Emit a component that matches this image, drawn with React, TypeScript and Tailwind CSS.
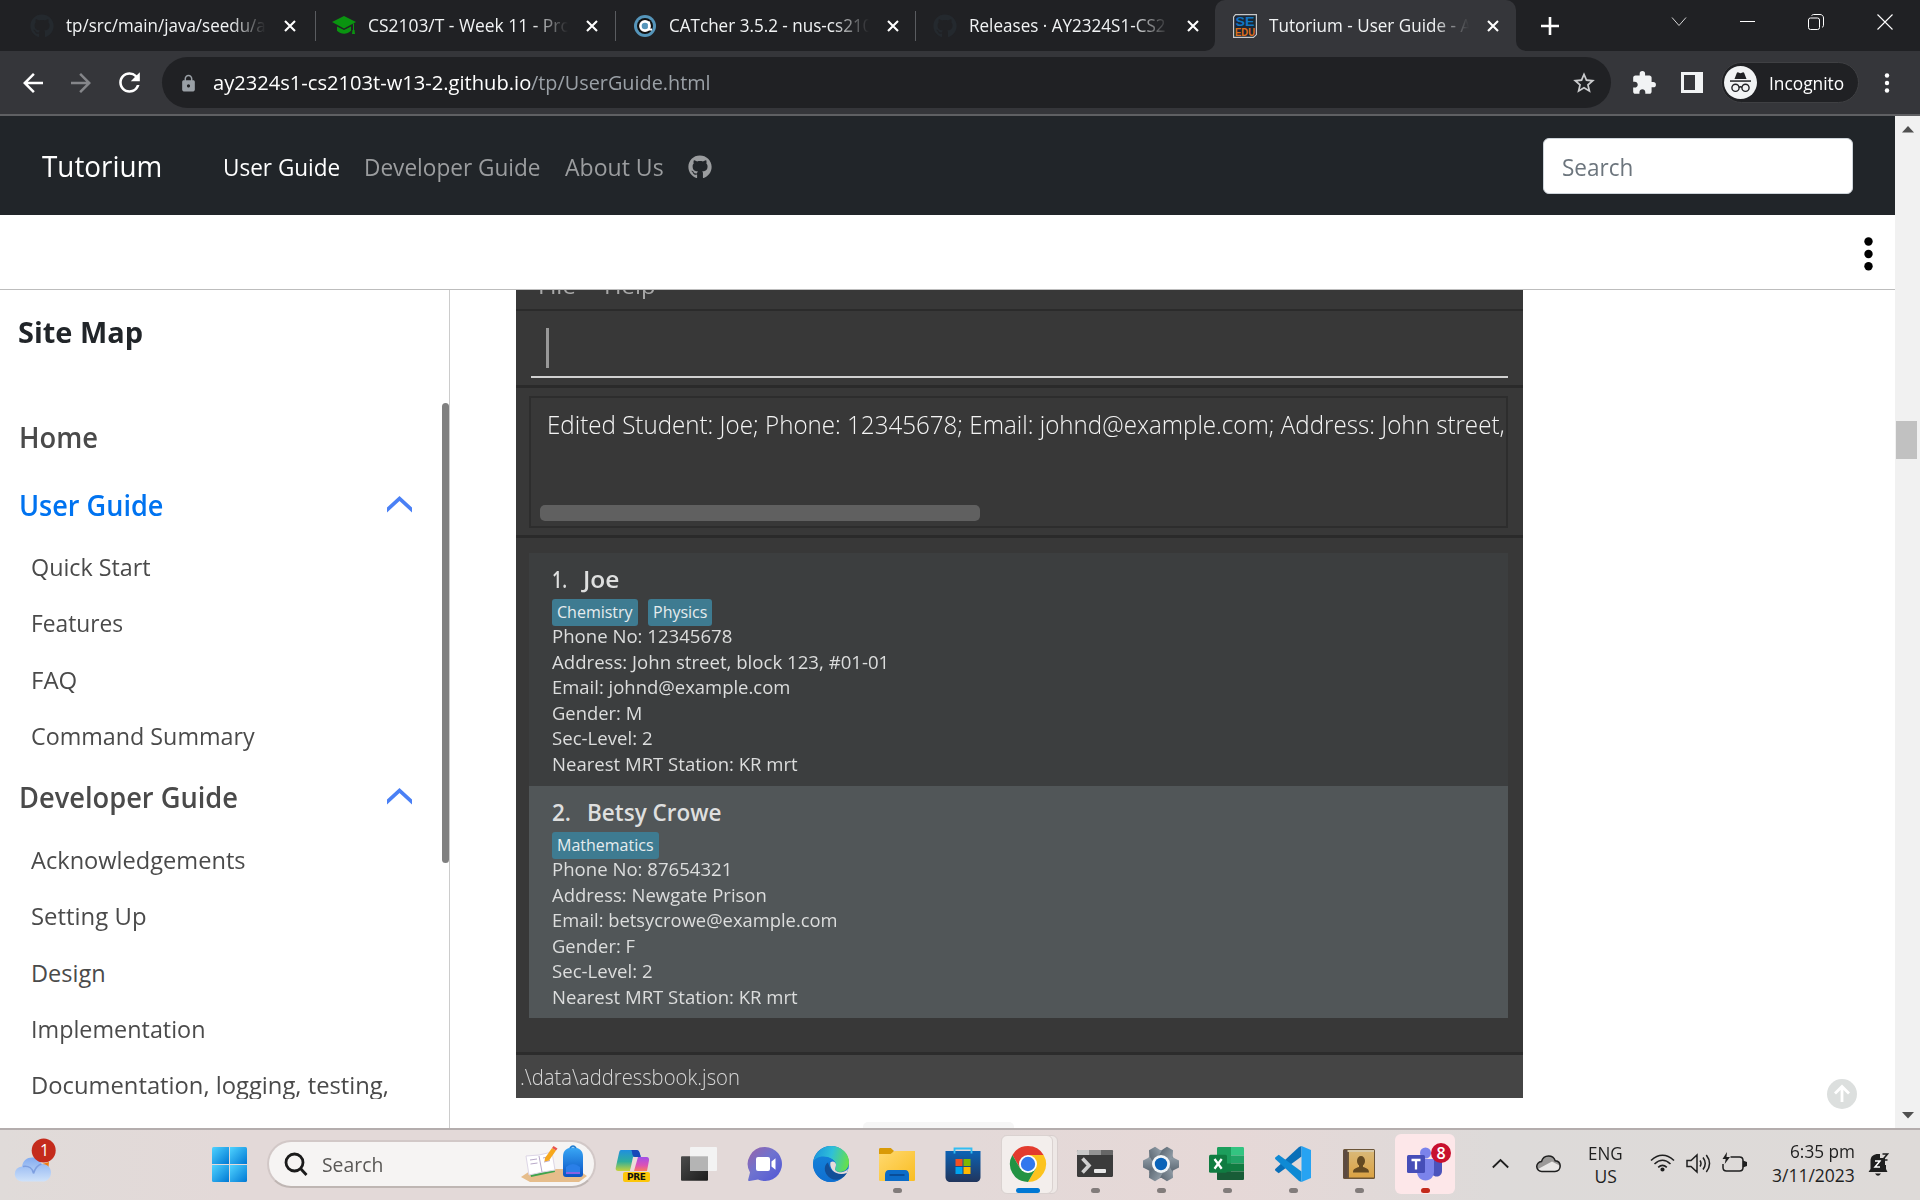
import { useLayoutEffect, useRef, useState, type ReactNode } from "react";
import { FaGithub } from "react-icons/fa";
import { MdArrowBack, MdArrowForward, MdRefresh, MdLock, MdStarBorder, MdExtension } from "react-icons/md";

/* One line of text, condensed or stretched to a given width. */
function T({ w, children, className = "" }: { w: number; children: string; className?: string }) {
  const ref = useRef<HTMLSpanElement>(null);
  const [scale, setScale] = useState(1);
  useLayoutEffect(() => {
    if (ref.current) setScale(w / ref.current.offsetWidth);
  }, [w]);
  return (
    <span className={"block shrink-0 whitespace-pre " + className} style={{ width: w }}>
      <span ref={ref} className="inline-block origin-left" style={{ transform: `scaleX(${scale})` }}>
        {children}
      </span>
    </span>
  );
}

function CloseX() {
  return (
    <svg className="h-3 w-3 shrink-0" viewBox="0 0 12 12" stroke="#fff" strokeWidth="2.1">
      <path d="M1 1l10 10M11 1L1 11" />
    </svg>
  );
}

function Cap() {
  return (
    <svg className="h-6 w-6" viewBox="0 0 24 24" fill="#0a9410">
      <path d="M0 8L12 2l12 6-12 6.5z" />
      <path d="M5 12.5l7 3.6 7-3.6v4.2c-2 2-4.500 3-7 3s-5-1-7-3z" />
      <path d="M21 9.500h1v7h-1zM20.500 16h2l.5 4h-3z" />
    </svg>
  );
}

function Catcher() {
  return (
    <svg className="h-6 w-6" viewBox="0 0 24 24">
      <circle cx="12" cy="12" r="11" fill="#5595ba" />
      <circle cx="12" cy="12" r="8" fill="#111" />
      <circle cx="12" cy="12" r="4.600" fill="#5595ba" stroke="#fff" strokeWidth="2.600" />
      <path d="M16 7.500v8h3" fill="none" stroke="#fff" strokeWidth="2.200" />
    </svg>
  );
}

function SeEdu() {
  return (
    <svg className="h-6 w-6" viewBox="0 0 24 24">
      <path d="M2.500.6h20.900v20l-3 2.800H.6V3z" fill="#1c2733" stroke="#c9c9c9" strokeWidth="1.200" />
      <text x="12" y="12" textAnchor="middle" fontFamily="Liberation Sans" fontWeight="700" fontSize="13" textLength="19" lengthAdjust="spacingAndGlyphs" fill="#1176c4">SE</text>
      <text x="12" y="21.500" textAnchor="middle" fontFamily="Liberation Sans" fontWeight="700" fontSize="10.500" textLength="20" lengthAdjust="spacingAndGlyphs" fill="#e0701a">EDU</text>
    </svg>
  );
}

function Tab({ icon, label, w, pad = "pl-[30px]" }: { icon: ReactNode; label: string; w: number; pad?: string }) {
  return (
    <div className={"flex h-[51px] items-center " + pad}>
      <span className="mr-3 w-6 shrink-0">{icon}</span>
      <div className="mb-px h-[30px] w-[200px] overflow-hidden text-[17.5px] leading-[30px] text-[#f1f3f4] [mask-image:linear-gradient(to_right,black_82%,transparent)]">
        <T w={w}>{label}</T>
      </div>
      <span className="ml-[18px]"><CloseX /></span>
    </div>
  );
}

function TabStrip() {
  return (
    <div className="flex h-[51px] bg-[#202124]">
      <div className="w-[315px]"><Tab icon={<FaGithub size={24} color="#24292e" />} label="tp/src/main/java/seedu/a" w={200} /></div>
      <div className="mt-[11px] h-[30px] w-px bg-[#5a5c60]" />
      <div className="w-[299px]"><Tab icon={<Cap />} label="CS2103/T - Week 11 - Pro" w={203} pad="pl-4" /></div>
      <div className="mt-[11px] h-[30px] w-px bg-[#5a5c60]" />
      <div className="w-[299px]"><Tab icon={<Catcher />} label="CATcher 3.5.2 - nus-cs210" w={203} pad="pl-[17px]" /></div>
      <div className="mt-[11px] h-[30px] w-px bg-[#5a5c60]" />
      <div className="w-[289px]"><Tab icon={<FaGithub size={24} color="#24292e" />} label="Releases · AY2324S1-CS2" w={197} pad="pl-[17px]" /></div>
      <div className="flex h-[51px] w-[10px] items-end bg-[#35363a]"><div className="h-[51px] w-[10px] rounded-br-[10px] bg-[#202124]" /></div>
      <div className="w-[301px] bg-[#202124]">
        <div className="h-[51px] rounded-t-[10px] bg-[#35363a]"><Tab icon={<SeEdu />} label="Tutorium - User Guide - A" w={202} pad="pl-[18px]" /></div>
      </div>
      <div className="w-[10px] bg-[#35363a]"><div className="h-[51px] w-[10px] rounded-bl-[10px] bg-[#202124]" /></div>
      <svg className="mt-[17px] ml-[15px] h-[18px] w-[18px]" viewBox="0 0 18 18" stroke="#fff" strokeWidth="2.600"><path d="M9 0v18M0 9h18" /></svg>
      <svg className="mt-[16px] ml-[112px] h-[11px] w-[16px]" viewBox="0 0 16 11" fill="none" stroke="#d5d5d6"><path d="M1 1.500l7 8 7-8" /></svg>
      <div className="mt-[21px] ml-[53px] h-px w-[15px] bg-white" />
      <svg className="mt-[14px] ml-[53px] h-4 w-4" viewBox="0 0 16 16" fill="none" stroke="#fff"><rect x=".5" y="4" width="11" height="11.500" rx="2" /><path d="M3.500 1.700C4.200.8 5 .5 6 .5h6c2 0 3.500 1.500 3.500 3.500v7c0 1-.5 2-1.500 2.500" /></svg>
      <svg className="mt-[14px] ml-[53px] h-4 w-4" viewBox="0 0 16 16" stroke="#fff" strokeWidth="1.100"><path d="M.5.5l15 15M15.500.5l-15 15" /></svg>
    </div>
  );
}

function Toolbar() {
  return (
    <div className="flex h-[65px] items-center border-b-2 border-[#5f6063] bg-[#35363a]">
      <MdArrowBack className="ml-[18px] shrink-0" size={30} color="#fff" />
      <MdArrowForward className="ml-[18px] shrink-0" size={30} color="#85868a" />
      <MdRefresh className="ml-[18px] shrink-0" size={31} color="#fff" />
      <div className="ml-[17px] flex h-[51px] w-[1449px] items-center rounded-full bg-[#202124] text-[20.5px] leading-[30px]">
        <MdLock className="mt-[2px] ml-[17px] shrink-0" size={19} color="#9aa0a6" />
        <T w={318} className="mb-[2px] ml-[15px] text-white">ay2324s1-cs2103t-w13-2.github.io</T>
        <T w={180} className="mb-[2px] text-[#9aa0a6]">/tp/UserGuide.html</T>
        <MdStarBorder className="ml-auto mr-[14px]" size={26} color="#cbccce" />
      </div>
      <MdExtension className="ml-[20px] shrink-0" size={26} color="#f1f3f4" />
      <svg className="ml-[24px] h-[21px] w-[22px] shrink-0" viewBox="0 0 22 21"><path fillRule="evenodd" d="M0 0h22v21H0zM3 3v15h11V3z" fill="#f1f3f4" /></svg>
      <div className="ml-[18px] flex h-[41px] w-[138px] shrink-0 items-center rounded-full border border-[#3f4043] bg-[#202124]">
        <svg className="ml-[2px] h-[33px] w-[33px] shrink-0" viewBox="0 0 33 33">
          <circle cx="16.500" cy="16.500" r="16.500" fill="#f1f3f4" />
          <path d="M10.500 13l2.300-6c.3-.7.9-.9 1.600-.6l2.100.8 2.100-.8c.7-.3 1.300-.1 1.600.6l2.300 6z" fill="#202124" />
          <path d="M6 14.300h21v1.500H6z" fill="#202124" />
          <g fill="none" stroke="#202124" strokeWidth="1.400"><circle cx="11.500" cy="21.800" r="3.600" /><circle cx="21.500" cy="21.800" r="3.600" /><path d="M15 21.500q1.500-1.300 3 0" /></g>
        </svg>
        <T w={75} className="ml-3 text-[18px] leading-[30px] text-white">Incognito</T>
      </div>
      <svg className="ml-[25px] h-[20px] w-[6px]" viewBox="0 0 6 20" fill="#fff"><circle cx="3" cy="2.500" r="2.200" /><circle cx="3" cy="10" r="2.200" /><circle cx="3" cy="17.500" r="2.200" /></svg>
    </div>
  );
}

function NavBar() {
  return (
    <div className="flex h-[99px] shrink-0 items-center bg-[#212529] text-[23.5px] leading-[36px] text-[#9b9d9f]">
      <T w={120} className="ml-[42px] text-[29px] text-white">Tutorium</T>
      <T w={117} className="mt-[2px] ml-[61px] text-white">User Guide</T>
      <T w={177} className="mt-[2px] ml-[24px]">Developer Guide</T>
      <T w={99} className="mt-[2px] ml-[24px]">About Us</T>
      <FaGithub className="mt-[2px] ml-[24px]" size={24} />
      <div className="mt-px mr-[42px] ml-auto flex h-[56px] w-[310px] items-center rounded-md border border-[#ced4da] bg-white pl-[18px] text-[#6c757d]">
        <T w={71} className="mt-[2px]">Search</T>
      </div>
    </div>
  );
}

type Item = [string, number];
const guide: Item[] = [["Quick Start", 120], ["Features", 92], ["FAQ", 46], ["Command Summary", 224]];
const dev: Item[] = [["Acknowledgements", 215], ["Setting Up", 116], ["Design", 75], ["Implementation", 174], ["Documentation, logging, testing,", 358]];

function SubItems({ items }: { items: Item[] }) {
  return (
    <div className="pl-[31px] text-[23.5px] leading-[56.25px]">
      {items.map(([s, w]) => <T key={s} w={w}>{s}</T>)}
    </div>
  );
}

function Chevron() {
  return <svg className="mb-[2px] ml-auto h-[17px] w-[25px]" viewBox="0 0 25 17" fill="#4a80f5"><path d="M12.500 0L25 11.500V16.500L12.500 5 0 16.500V11.500z" /></svg>;
}

function Sidebar() {
  return (
    <div className="flex w-[450px] shrink-0 border-r border-[#cccccc] text-[#4a4a4a]">
      <div className="flex h-[809px] w-[442px] flex-col overflow-hidden pt-2 text-[28px] leading-[68px]">
        <T w={125} className="ml-[18px] font-bold text-[#212529]">Site Map</T>
        <T w={79} className="mt-[37px] ml-[19px] font-semibold">Home</T>
        <div className="flex h-[68px] shrink-0 items-center pr-[30px] pl-[19px]">
          <T w={144} className="font-semibold text-[#0073f0]">User Guide</T>
          <Chevron />
        </div>
        <SubItems items={guide} />
        <div className="mb-[2px] flex h-[66px] shrink-0 items-center pr-[30px] pl-[19px]">
          <T w={219} className="font-semibold">Developer Guide</T>
          <Chevron />
        </div>
        <SubItems items={dev} />
      </div>
      <div className="mt-[113px] h-[460px] w-[7px] rounded-full bg-[#808080]" />
    </div>
  );
}

type Student = { n: string; nw: number; name: string; w: number; tags: Item[]; lines: Item[] };
const students: Student[] = [
  {
    n: "1.", nw: 15, name: "Joe", w: 36, tags: [["Chemistry", 76], ["Physics", 54]],
    lines: [["Phone No: 12345678", 180], ["Address: John street, block 123, #01-01", 337], ["Email: johnd@example.com", 238], ["Gender: M", 90], ["Sec-Level: 2", 101], ["Nearest MRT Station: KR mrt", 246]],
  },
  {
    n: "2.", nw: 19, name: "Betsy Crowe", w: 135, tags: [["Mathematics", 97]],
    lines: [["Phone No: 87654321", 180], ["Address: Newgate Prison", 215], ["Email: betsycrowe@example.com", 286], ["Gender: F", 83], ["Sec-Level: 2", 101], ["Nearest MRT Station: KR mrt", 246]],
  },
];

function Card({ s, className }: { s: Student; className: string }) {
  return (
    <div className={"pl-[23px] text-[#dcdddd] " + className}>
      <div className="flex gap-[16px] pt-[12px] text-[22.5px] leading-[30px] font-semibold text-[#dedfdf]">
        <T w={s.nw}>{s.n}</T>
        <T w={s.w}>{s.name}</T>
      </div>
      <div className="mt-[4px] flex h-[25px] gap-[10px]">
        {s.tags.map(([t, w]) => (
          <div key={t} className="h-[27px] rounded-[3px] bg-[#3e7b91] px-[5px] text-[16px] leading-[26px] font-medium text-[#e6ecee]"><T w={w}>{t}</T></div>
        ))}
      </div>
      <div className="text-[19px] leading-[25.5px]">
        {s.lines.map(([t, w]) => <T key={t} w={w}>{t}</T>)}
      </div>
    </div>
  );
}

function AppShot() {
  return (
    <div className="ml-[66px] flex h-[808px] w-[1007px] shrink-0 flex-col overflow-hidden bg-[#383838]">
      <div className="flex h-[19px] shrink-0 items-end pl-[22px] text-[22px] leading-[30px] text-[#a8a8a8]">
        <T w={38} className="h-[39px]">File</T>
        <T w={52} className="ml-[28px] h-[39px]">Help</T>
      </div>
      <div className="h-[2px] shrink-0 bg-[#2b2b2b]" />
      <div className="mx-[15px] h-[67px] shrink-0 border-b-2 border-[#d0d0d0] pt-[17px] pl-[15px]">
        <div className="h-[40px] w-[3px] bg-[#999]" />
      </div>
      <div className="mt-[7px] h-[3px] shrink-0 bg-[#2a2a2a]" />
      <div className="mt-[8px] ml-[13px] flex h-[132px] w-[979px] shrink-0 flex-col overflow-hidden border-2 border-[#2d2d2d]">
        <T w={958} className="mt-[8px] ml-4 text-[25px] leading-[36px] font-light text-[#f4f4f4]">Edited Student: Joe; Phone: 12345678; Email: johnd@example.com; Address: John street,</T>
        <div className="mt-auto mb-[5px] ml-[9px] h-4 w-[440px] rounded-[5px] bg-[#606060]" />
      </div>
      <div className="mt-[7px] h-[3px] shrink-0 bg-[#2a2a2a]" />
      <div className="mt-[15px] ml-[13px] w-[979px] shrink-0">
        <Card s={students[0]} className="h-[233px] bg-[#3c3e3f]" />
        <Card s={students[1]} className="h-[232px] bg-[#515658]" />
      </div>
      <div className="mt-[34px] h-[3px] shrink-0 bg-[#2c2c2c]" />
      <div className="flex-1 bg-[#454545] pl-1 text-[22px] leading-[42px] font-light text-[#d8d8d8]">
        <T w={220}>.\data\addressbook.json</T>
      </div>
    </div>
  );
}

function Page() {
  return (
    <div className="flex h-[1012px]">
      <div className="flex w-[1895px] flex-col bg-white">
        <NavBar />
        <div className="flex h-[75px] shrink-0 items-center justify-end border-b border-[#bdbdbd] pr-[22px]">
          <svg className="mt-[3px] h-[34px] w-[9px]" viewBox="0 0 9 34"><circle cx="4.500" cy="4.500" r="4.200" /><circle cx="4.500" cy="17" r="4.200" /><circle cx="4.500" cy="29.300" r="4.200" /></svg>
        </div>
        <div className="relative flex h-[838px]">
          <Sidebar />
          <AppShot />
          <svg className="mt-[789px] ml-[304px] h-[30px] w-[30px]" viewBox="0 0 30 30" fill="none"><circle cx="15" cy="15" r="15" fill="#dcdfde" /><path d="M15 23V8M8 14.500L15 7.500l7 7" stroke="#fff" strokeWidth="2.800" /></svg>
          <div className="absolute bottom-0 left-[863px] h-[6px] w-[151px] rounded-t-[5px] bg-[#f6f6f6]" />
        </div>
      </div>
      <div className="flex w-[25px] flex-col items-center bg-[#f1f1f1]">
        <svg className="mt-[10px] h-[7px] w-[12px]" viewBox="0 0 12 7" fill="#505050"><path d="M0 6.500L6 0l6 6.500z" /></svg>
        <div className="mt-[288px] h-[38px] w-[21px] -translate-x-px bg-[#c1c1c1]" />
        <svg className="mt-auto mb-[9px] h-[7px] w-[12px]" viewBox="0 0 12 7" fill="#505050"><path d="M0 0h12L6 6.500z" /></svg>
      </div>
    </div>
  );
}

function Pic({ children }: { children: ReactNode }) {
  return <svg className="h-9 w-9 overflow-visible" viewBox="0 0 36 36">{children}</svg>;
}

const gradients = (
  <svg className="absolute h-0 w-0">
    <defs>
      <linearGradient id="win" x1="0" y1="0" x2="1" y2="1"><stop offset="0" stopColor="#4fd3ff" /><stop offset="1" stopColor="#0078d4" /></linearGradient>
      <linearGradient id="cloud" x1="0" y1="0" x2="0" y2="1"><stop offset="0" stopColor="#84acf0" /><stop offset="1" stopColor="#cfe2fa" /></linearGradient>
      <linearGradient id="copA" x1="0" y1="0" x2="0" y2="1"><stop offset="0" stopColor="#1f8fe0" /><stop offset=".55" stopColor="#2fae9c" /><stop offset="1" stopColor="#c8d23a" /></linearGradient>
      <linearGradient id="copB" x1="0" y1="0" x2="0" y2="1"><stop offset="0" stopColor="#a14fe8" /><stop offset=".6" stopColor="#dd52b5" /><stop offset="1" stopColor="#fb7c5c" /></linearGradient>
      <linearGradient id="blk" x1="0" y1="0" x2="1" y2="1"><stop offset="0" stopColor="#4b4b4b" /><stop offset="1" stopColor="#1c1c1c" /></linearGradient>
      <linearGradient id="chat" x1="0" y1="0" x2="1" y2="1"><stop offset="0" stopColor="#9a62a8" /><stop offset=".45" stopColor="#6f73cf" /><stop offset="1" stopColor="#4f55d6" /></linearGradient>
      <linearGradient id="edgeA" x1="0" y1=".3" x2="1" y2=".5"><stop offset="0" stopColor="#1a94dd" /><stop offset=".5" stopColor="#2fc0d8" /><stop offset="1" stopColor="#66e04a" /></linearGradient>
      <linearGradient id="edgeB" x1="0" y1="0" x2="0" y2="1"><stop offset="0" stopColor="#1480d8" /><stop offset="1" stopColor="#0f6fd0" /></linearGradient>
      <linearGradient id="fold" x1="0" y1="0" x2="1" y2="1"><stop offset="0" stopColor="#ffd970" /><stop offset="1" stopColor="#f9bd22" /></linearGradient>
      <linearGradient id="store" x1="0" y1="0" x2="0" y2="1"><stop offset="0" stopColor="#0c63b5" /><stop offset="1" stopColor="#21355c" /></linearGradient>
      <linearGradient id="gear" x1="0" y1="0" x2="0" y2="1"><stop offset="0" stopColor="#8d99a3" /><stop offset="1" stopColor="#626e79" /></linearGradient>
      <linearGradient id="book" x1="0" y1="0" x2="0" y2="1"><stop offset="0" stopColor="#d9b877" /><stop offset="1" stopColor="#dba243" /></linearGradient>
      <linearGradient id="bag" x1="0" y1="0" x2="0" y2="1"><stop offset="0" stopColor="#39a7f5" /><stop offset="1" stopColor="#0a52c4" /></linearGradient>
    </defs>
  </svg>
);

const Copilot = (
  <Pic>
    <path d="M6 4h15c2 0 3 1 3.600 3l.9 3h-5L15 25H3.500C1 25 .2 23.500.9 21L4 7c.4-2 1-3 2-3z" fill="url(#copA)" />
    <path d="M16 4h5.500c2 0 2.600 1 3.200 3l1.200 4h-5.500c-2 0-2.800-1.500-3.200-3.500C17 5.500 16.800 4 16 4z" fill="#1848b8" />
    <path d="M21 11h10.500c2.500 0 2.900 1.700 2.400 4L32 25H15.500z" fill="url(#copB)" />
    <path d="M18 11h5l-4 14h-4z" fill="#ecdcd9" />
    <rect x="8" y="26" width="27" height="10" rx="2" fill="#fcc60a" />
    <text x="21.500" y="34.300" textAnchor="middle" fontFamily="DejaVu Sans" fontWeight="700" fontSize="9" textLength="19" fill="#111">PRE</text>
  </Pic>
);
const TaskView = (
  <Pic>
    <rect x="0" y="10.300" width="27" height="24.500" rx="1" fill="url(#blk)" />
    <rect x="9" y="1" width="27" height="24" rx="1" fill="#f3f3f3" />
    <path d="M9 10.300h18V25H9z" fill="#b4b4b4" />
  </Pic>
);
const Chat = (
  <Pic>
    <path d="M18 1a17 17 0 1 1-7 32.500L2.500 35c-1 .2-1.600-.6-1.300-1.500L3 26.500A17 17 0 0 1 18 1z" fill="url(#chat)" />
    <rect x="9" y="11" width="14" height="14" rx="2" fill="#fff" />
    <path d="M24.500 15.500l4-3.300v11.600l-4-3.300z" fill="#fff" />
  </Pic>
);
const Edge = (
  <Pic>
    <circle cx="18" cy="18" r="18" fill="#0f72cf" />
    <path d="M0 17C1 7 9 0 18 0c10 0 18 7 18 16 0 6-4 10-9 10-3 0-5-1.500-5-3 0-1 1-1.500 1-4 0-4-5-8-12-8C5 11 1 14 0 17z" fill="url(#edgeA)" />
    <path d="M0 17c1-4 5-6.500 10.500-6.500S22 14 22.800 18c-1-3-4-4-6.300-2.500C13 18 12 22 14 26c2 5 7 8 13 7-3 2-6 3-9 3C8 36 0 28 0 17z" fill="url(#edgeB)" />
    <path d="M14.500 16.500C11 20 11 25 14 29s8 6 13 4c3-1.300 5.500-3.500 6.700-6 .3-.7-.3-1-1-.7-5 2.300-12 .7-15-3.300-1.500-2-2-5-3.200-6.500z" fill="#124f98" />
    <path d="M23 18.500c0 2.500-1 3.300-1 4.500 0 2 3 3.500 6.500 3.200 3-.3 5-1.600 7-3.700L33.700 27c-5 1.800-11 1-14-2.500-2-2.300-3-6-2.200-8.200 2-1.800 5-.8 5.500 2.200z" fill="#e8dcda" />
  </Pic>
);
const Folder = (
  <Pic>
    <path d="M0 3.500C0 2.500.6 2 1.500 2h10.300l3.200 3-3 4H0z" fill="#d99a06" />
    <path d="M0 8h11.500l4-3H36v28.500c0 1-.6 1.500-1.500 1.500h-33C.6 35 0 34.500 0 33.500z" fill="url(#fold)" />
    <path d="M6 35v-6.500c0-2.500 1.500-4.500 4-4.500h16c2.500 0 4 2 4 4.500V35z" fill="#0c6cc8" />
    <path d="M10.500 29h15" stroke="#094a92" strokeWidth="1.800" />
  </Pic>
);
const Store = (
  <Pic>
    <path d="M.5 5h35v26c0 3-2 5-5 5h-25c-3 0-5-2-5-5z" fill="url(#store)" />
    <path d="M9.500 7.500V2.500h17v5" fill="none" stroke="#32bdf2" strokeWidth="1.800" />
    <path d="M10.500 13h7v7h-7z" fill="#f25022" /><path d="M18.500 13h7v7h-7z" fill="#7fba00" />
    <path d="M10.500 21h7v7h-7z" fill="#00a4ef" /><path d="M18.500 21h7v7h-7z" fill="#ffb900" />
  </Pic>
);
const Chrome = (
  <Pic>
    <path d="M2.400 9A18 18 0 0 1 33.600 9H18l-7.800 13.500z" fill="#e33b2e" />
    <path d="M33.600 9A18 18 0 0 1 18 36l7.800-13.500L18 9z" fill="#fcc31e" />
    <path d="M18 36A18 18 0 0 1 2.400 9l7.800 13.500h15.600z" fill="#229343" />
    <circle cx="18" cy="18" r="9" fill="#fff" /><circle cx="18" cy="18" r="7.200" fill="#3178ee" />
  </Pic>
);
const Terminal = (
  <Pic>
    <rect y="4" width="36" height="27" rx="1.500" fill="#3b3b3b" />
    <path d="M0 9V5.500C0 4.500.5 4 1.500 4H12v5z" fill="#c9c9c9" /><path d="M12 4h12v5H12z" fill="#949494" /><path d="M24 4h10.500c1 0 1.500.5 1.500 1.500V9H24z" fill="#666" />
    <path d="M5.500 12.500l6.500 7-6.500 7" fill="none" stroke="#cfcfcf" strokeWidth="3.600" />
    <rect x="17" y="23" width="12" height="4" rx="1" fill="#e8e8e8" />
  </Pic>
);
const Gear = (
  <Pic>
    <g fill="url(#gear)">
      <circle cx="18" cy="18" r="14" />
      {["rotate-0", "rotate-60", "rotate-120"].map((r) => (
        <path key={r} className={"origin-center " + r} d="M0 14.500L5 12h26l5 2.500v7L31 24H5L0 21.500z" />
      ))}
    </g>
    <circle cx="18" cy="18" r="9" fill="#f2f5f7" /><circle cx="18" cy="18" r="6.200" fill="#0a63b8" />
  </Pic>
);
const Excel = (
  <Pic>
    <path d="M8 2.500C8 1.500 8.500 1 9.500 1H22v33H9.500C8.500 34 8 33.500 8 32.500z" fill="#1c9e5c" />
    <path d="M22 1h11.500c1 0 1.500.5 1.500 1.500V9.500H22z" fill="#33c481" /><path d="M22 9.500h13v8H22z" fill="#21a366" /><path d="M8 17.500h27v8H8z" fill="#107c41" /><path d="M8 25.500h27v7c0 1-.5 1.500-1.500 1.500h-24c-1 0-1.500-.5-1.500-1.500z" fill="#185c37" />
    <rect y="8.700" width="18" height="18" rx="1.500" fill="#107c41" />
    <path d="M5.500 13l7.200 9.800M12.700 13l-7.200 9.800" stroke="#fff" strokeWidth="2.300" />
  </Pic>
);
const VsCode = (
  <Pic>
    <path d="M26.500 10.500L3.700 27.300.5 24.800c-.7-.6-.7-1.400 0-2.100L24 1l2.500-1z" fill="#0a6fb8" />
    <path d="M26.500 25.500L3.700 8.700.5 11.200c-.7.6-.7 1.400 0 2.100L24 35l2.500 1z" fill="#0f8ad4" />
    <path d="M26.500 0L36 4v28l-9.500 4z" fill="#27a3f2" />
  </Pic>
);
const Book = (
  <Pic>
    <rect x="2" y="3" width="32" height="30" rx="1.500" fill="#6b5437" />
    <rect x="8" y="5.500" width="25" height="26" fill="url(#book)" /><path d="M4 4h29v2H4z" fill="#d8c9a8" /><path d="M2.500 4h4v28h-4z" fill="#5c4a41" />
    <ellipse cx="20" cy="15" rx="4" ry="5" fill="#644a22" /><path d="M12 26.500c0-4 3-4.500 6-5.500v-3h4v3c3 1 6 1.500 6 5.500z" fill="#644a22" />
  </Pic>
);
const Teams = (
  <Pic>
    <circle cx="18.500" cy="7" r="5.500" fill="#7b83eb" />
    <path d="M24 13h11v12c0 3.500-2.500 5.500-5.500 5.500S24 28 24 25z" fill="#4b53bc" />
    <path d="M10 13h17v12.500c0 5-3.500 9-8.500 9s-8.500-4-8.500-9z" fill="#7b83eb" />
    <rect y="9" width="18" height="18" rx="1.500" fill="#464eb8" />
    <path d="M4.500 14h9M9 14v9.500" stroke="#fff" strokeWidth="2.300" />
    <circle cx="34" cy="7" r="10" fill="#c8102e" />
    <text x="34" y="12.500" textAnchor="middle" fontFamily="Open Sans" fontWeight="600" fontSize="16" fill="#fff">8</text>
  </Pic>
);

const apps: { id: string; icon: ReactNode; state: "idle" | "open" | "active" | "alert" }[] = [
  { id: "copilot", icon: Copilot, state: "idle" },
  { id: "taskview", icon: TaskView, state: "idle" },
  { id: "chat", icon: Chat, state: "idle" },
  { id: "edge", icon: Edge, state: "idle" },
  { id: "files", icon: Folder, state: "open" },
  { id: "store", icon: Store, state: "idle" },
  { id: "chrome", icon: Chrome, state: "active" },
  { id: "terminal", icon: Terminal, state: "open" },
  { id: "settings", icon: Gear, state: "open" },
  { id: "excel", icon: Excel, state: "open" },
  { id: "vscode", icon: VsCode, state: "open" },
  { id: "book", icon: Book, state: "open" },
  { id: "teams", icon: Teams, state: "alert" },
];

function AppButton({ icon, state }: { icon: ReactNode; state: string }) {
  return (
    <div className="relative flex h-[70px] w-[66px] shrink-0 flex-col items-center pt-4">
      {state === "active" && <div className="absolute top-[5px] left-[5px] h-[59px] w-[57px] rounded-md border border-[#d8cfce] bg-[#eee8e6]" />}
      {state === "active" && <div className="absolute top-[5px] left-[5px] h-[59px] w-[52px] rounded-md border border-[#dad2d0] bg-[#f3eeec]" />}
      {state === "alert" && <div className="absolute top-1 left-[3px] h-[60px] w-[60px] rounded-md bg-[#fde7e9]" />}
      <div className={state === "alert" ? "relative -ml-[1px]" : state === "active" ? "relative -ml-[3px]" : "relative"}>{icon}</div>
      {state === "open" && <div className="mt-[6px] h-[5px] w-[9px] rounded-full bg-[#827c7b]" />}
      {state === "active" && <div className="relative mt-[6px] -ml-[3px] h-[5px] w-6 rounded-full bg-[#0078d4]" />}
      {state === "alert" && <div className="relative mt-[6px] h-[5px] w-[9px] rounded-full bg-[#c42b1c]" />}
    </div>
  );
}

function Taskbar() {
  return (
    <div className="flex h-[72px] border-t-2 border-[#b4adad] bg-[linear-gradient(to_right,#e0dbd9,#e3d9d8_12%,#e3d9d8_50%,#e6d8d7_64%,#dddad9_78%,#dedad8)] text-[#1f1f1f]">
      {gradients}
      <svg className="mt-4 ml-[14px] h-9 w-[42px] shrink-0 overflow-visible" viewBox="0 0 42 36">
        <path d="M28 18l7-2-1 9h-6z" fill="#f07a12" />
        <path d="M8.500 35.500a7.500 7.500 0 0 1-.5-15C9 14.500 13 11.500 18 11.500c4.500 0 8 2.500 9.500 6.500 5.500-.5 9.500 3.500 9.500 8.700s-4 8.800-8.500 8.800z" fill="url(#cloud)" />
        <path d="M9 20.500c6-1 10 2 10.500 7 1.500-5 4.500-8.500 8-9.500" fill="none" stroke="#7e9fe0" strokeWidth="1.500" />
        <circle cx="29.700" cy="4.500" r="12" fill="#c42b1c" />
        <text x="30.500" y="10.300" textAnchor="middle" fontFamily="Open Sans" fontSize="16" fill="#fff">1</text>
      </svg>
      <svg className="mt-[17px] ml-[156px] h-[35px] w-[35px] shrink-0" viewBox="0 0 35 35" fill="url(#win)">
        <path d="M0 1.500Q0 0 1.500 0H17v17H0z" /><path d="M18 0h15.500Q35 0 35 1.500V17H18z" /><path d="M0 18h17v17H1.500Q0 35 0 33.500z" /><path d="M18 18h17v15.500q0 1.500-1.500 1.500H18z" />
      </svg>
      <div className="mt-[10px] ml-[20px] flex h-[48px] w-[329px] shrink-0 items-center rounded-full border-2 border-[#d2c8c7] border-b-[#bfb6b3] bg-[#f6f4f3]">
        <svg className="ml-[15px] h-6 w-6" viewBox="0 0 24 24" fill="none" stroke="#1b1b1b" strokeWidth="2.800"><circle cx="10.500" cy="10.500" r="8.500" /><path d="M16.500 16.500l6 6.500" /></svg>
        <T w={61} className="mt-px ml-[14px] text-[20px] leading-[30px] text-[#5a5856]">Search</T>
        <svg className="ml-auto mr-[6px] h-[38px] w-[68px]" viewBox="0 0 68 38">
          <path d="M1 32l12-8h44l10 7-8 6H10z" fill="#e6bd8b" />
          <path d="M7 13l24-5 4 19-24 5z" fill="#3fa44c" /><path d="M6 11l13-1 13-3 3 18-12 2-14 3z" fill="#fff" stroke="#ddd6e6" /><path d="M19 11l3 16M10 15l7-1M10.500 19l7-1M23 13l6-1.500M24 17l6-1.500" stroke="#b9a9c9" />
          <path d="M25 13l7-10 4 2.500-7 10-4.500 1z" fill="#f7a81b" /><path d="M32 3l1.500-2L37.500 3.500 36 5.500z" fill="#e8554f" />
          <path d="M43 12c0-7 4-9.500 10-9.500S63 5 63 12v17c0 2-1 3-3 3H46c-2 0-3-1-3-3z" fill="url(#bag)" /><path d="M50 3q3-4 6 0" fill="none" stroke="#1b7ad0" strokeWidth="1.500" /><path d="M46 22q7-6 14 0v5H46z" fill="#2a7fe8" /><path d="M46 28h14" stroke="#b265e8" strokeWidth="1.500" />
        </svg>
      </div>
      <div className="ml-[4px] flex">
        {apps.map((a) => <AppButton key={a.id} icon={a.icon} state={a.state} />)}
      </div>
      <svg className="mt-[28px] ml-[34px] h-[11px] w-[17px] shrink-0" viewBox="0 0 17 11" fill="none" stroke="#1f1f1f" strokeWidth="1.800"><path d="M.8 9.500l7.700-7.500 7.700 7.500" /></svg>
      <svg className="mt-[25px] ml-[27px] h-[18px] w-[25px] shrink-0" viewBox="0 0 25 18">
        <path d="M6 16.500a5 5 0 0 1-.5-10C6.500 3 9 1 12.500 1 16 1 18.300 3 19.200 5.700c3 .3 5 2.500 5 5.400 0 3-2.200 5.400-5.200 5.400z" fill="#9b9998" />
        <path d="M2 14l14-7.500 7.500 4v3.500l-4 2.500H6z" fill="#e9e7e6" />
        <path d="M6 16.500a5 5 0 0 1-.5-10C6.500 3 9 1 12.500 1 16 1 18.300 3 19.200 5.700c3 .3 5 2.500 5 5.400 0 3-2.200 5.400-5.200 5.400z" fill="none" stroke="#1f1f1f" strokeWidth="1.500" />
      </svg>
      <div className="mt-[12px] ml-[27px] flex flex-col items-center text-[17.5px] leading-[23px]">
        <T w={35}>ENG</T>
        <T w={22}>US</T>
      </div>
      <svg className="mt-[24px] ml-[27px] h-[18px] w-[25px] shrink-0" viewBox="0 0 25 18" fill="none" stroke="#1f1f1f" strokeWidth="1.600"><path d="M1 6.500q11.500-10.500 23 0M4.500 10q8-7.500 16 0M8.200 13.300q4.300-4 8.600 0" /><circle cx="12.500" cy="15.500" r="1.300" fill="#1f1f1f" /></svg>
      <svg className="mt-[23px] ml-[11px] h-[21px] w-[25px] shrink-0" viewBox="0 0 25 21" fill="none" stroke="#1f1f1f" strokeWidth="1.500"><path d="M1 7.500h4l6-5.500v17l-6-5.500H1zM14 7.500q2 3 0 6M17 4.500q4.500 6 0 12M20.300 2q6.500 8.500 0 17" /></svg>
      <svg className="mt-[22px] ml-[11px] h-[21px] w-[25px] shrink-0" viewBox="0 0 25 21" fill="none" stroke="#1f1f1f" strokeWidth="1.500"><path d="M8.500 5h9q3.500 0 3.500 3.500v7q0 3.500-3.500 3.500h-13q-3.500 0-3.500-3.500V12" /><path d="M21.500 9.500v5l3-1v-3z" fill="#1f1f1f" /><path d="M5 0L.5 7h3.200l-1 5L8 5H4.500z" fill="#1f1f1f" stroke="none" /></svg>
      <div className="mt-[9px] ml-[25px] flex flex-col items-end text-[17.5px] leading-[24px]">
        <T w={65}>6:35 pm</T>
        <T w={83}>3/11/2023</T>
      </div>
      <svg className="mt-[22px] ml-[13px] h-[25px] w-[22px] shrink-0" viewBox="0 0 22 25">
        <path d="M2.500 17V9C2.500 4 6 2 10 2h2v4h5v7h1v4l1.500 3H.5z" fill="#1f1f1f" /><path d="M7 21.500h6q-3 4.500-6 0z" fill="#1f1f1f" />
        <path d="M7 9h5l-5 6h5" fill="none" stroke="#fff" strokeWidth="1.500" /><path d="M14.500 2h5l-5 6h5" fill="none" stroke="#1f1f1f" strokeWidth="1.600" />
      </svg>
    </div>
  );
}

export default function App() {
  return (
    <div className="flex h-[1200px] w-[1920px] flex-col overflow-hidden bg-white font-['Open_Sans','Noto_Sans',sans-serif]">
      <TabStrip />
      <Toolbar />
      <Page />
      <Taskbar />
    </div>
  );
}
